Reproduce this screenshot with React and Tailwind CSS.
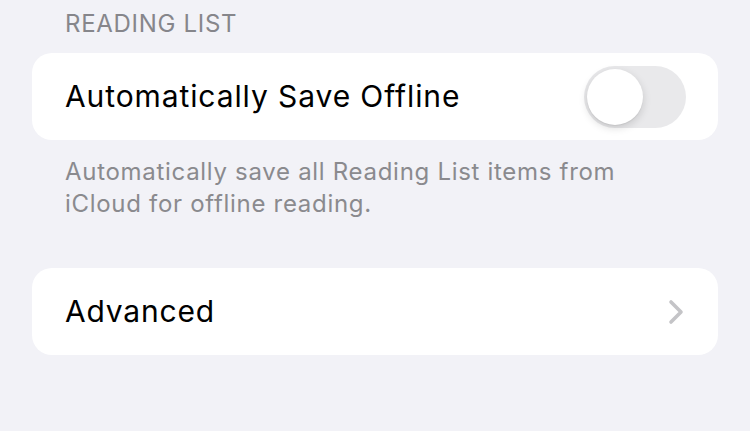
import React, { useState } from 'react';

const Toggle = ({ checked, onChange }) => (
    <button
        onClick={() => onChange(!checked)}
        className={`w-[102px] h-[62px] rounded-full p-[3px] flex items-center transition-colors ${checked ? 'bg-[#34c759]' : 'bg-[#e9e9eb]'}`}
    >
        <div className={`w-[56px] h-[56px] rounded-full bg-white shadow-[0_3px_8px_rgba(0,0,0,0.15),0_1px_1px_rgba(0,0,0,0.06)] transition-transform ${checked ? 'translate-x-[40px]' : 'translate-x-0'}`} />
    </button>
);

const Chevron = () => (
    <svg width="16" height="26" viewBox="0 0 16 26" fill="none">
        <path d="M3 3l10 10-10 10" stroke="#c4c4c7" strokeWidth="3.6" strokeLinecap="round" strokeLinejoin="round" />
    </svg>
);

export default function App() {
    const [saveOffline, setSaveOffline] = useState(false);

    return (
        <div className="w-[750px] h-[431px] bg-[#f2f2f7] px-[32px] pt-[9px] font-['Inter',sans-serif] overflow-hidden">
            {/* Reading list section */}
            <div className="pl-[33px] text-[24px] leading-[30px] text-[#86868b] tracking-[0.7px]">READING LIST</div>
            <div className="mt-[14px] bg-white rounded-[20px] h-[87px] pl-[33px] pr-[32px] flex items-center justify-between">
                <span className="text-[30px] text-black tracking-[0.9px]">Automatically Save Offline</span>
                <Toggle checked={saveOffline} onChange={setSaveOffline} />
            </div>
            <p className="pl-[33px] pr-[60px] mt-[16px] text-[24px] leading-[32px] text-[#8a8a8e] tracking-[0.7px]">
                Automatically save all Reading List items from iCloud for offline reading.
            </p>

            {/* Advanced */}
            <div className="mt-[48px] bg-white rounded-[20px] h-[87px] pl-[33px] pr-[34px] flex items-center justify-between">
                <span className="text-[30px] text-black tracking-[0.8px]">Advanced</span>
                <Chevron />
            </div>
        </div>
    );
}
